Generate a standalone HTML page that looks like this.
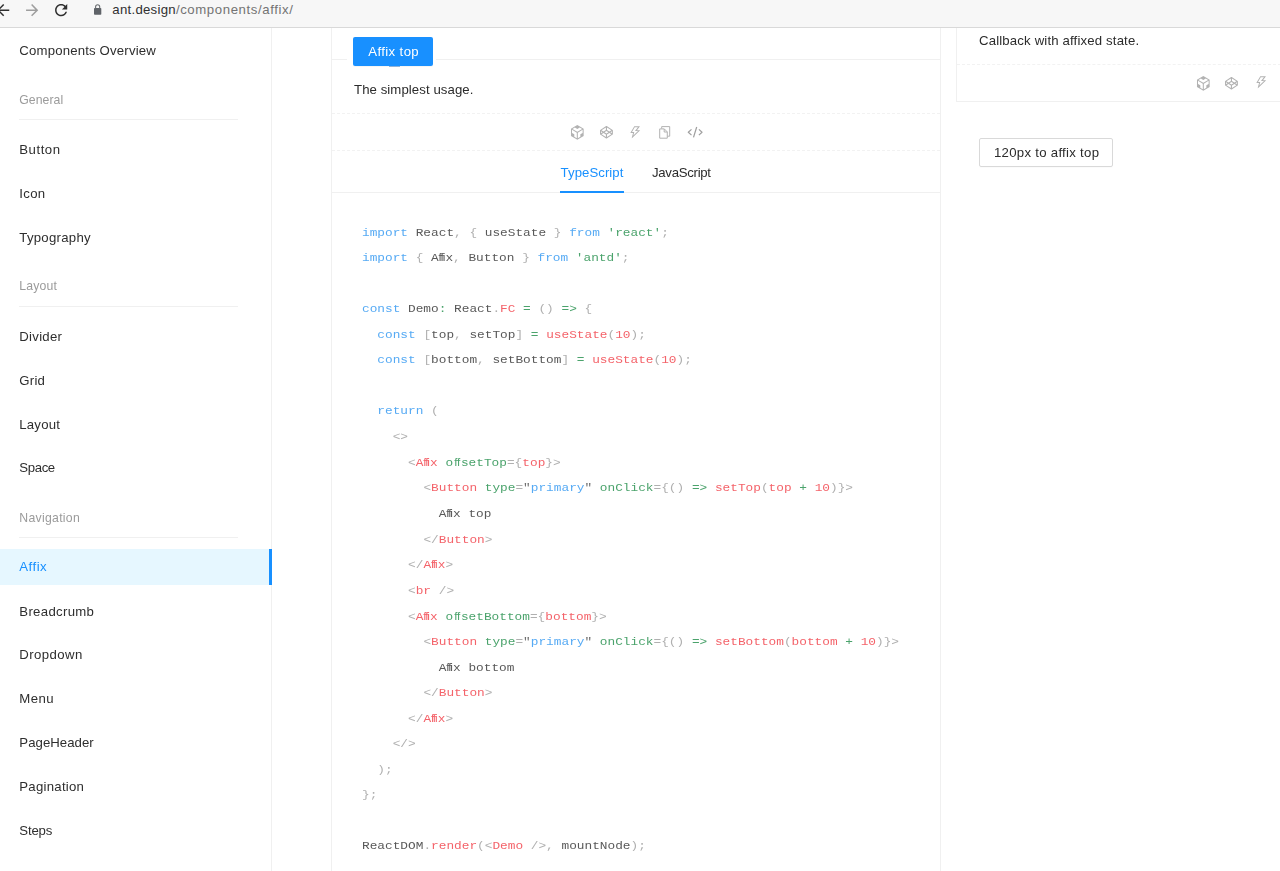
<!DOCTYPE html>
<html lang="en">
<head>
<meta charset="utf-8">
<title>Affix - Ant Design</title>
<style>
*{box-sizing:border-box}
html,body{margin:0;padding:0}
body{filter:blur(.45px);width:1280px;height:871px;overflow:hidden;background:#fff;position:relative;
  font-family:"Liberation Sans",sans-serif;font-size:13.2px;color:#2b2b2b}
/* ---------- browser chrome ---------- */
.chrome{position:absolute;left:0;top:0;width:1280px;height:28px;background:#f7f7f7;border-bottom:1px solid #d9d9d9}
.chrome svg{position:absolute;width:18.3px;height:18.3px;top:0.8px}
.url{position:absolute;left:112.3px;top:0;height:20px;line-height:20px;color:#737373;white-space:nowrap;letter-spacing:.6px}
.url b{font-weight:400;color:#303030;letter-spacing:.273px}
/* ---------- sidebar ---------- */
.side{position:absolute;left:0;top:28px;width:272px;height:843px;border-right:1px solid #f0f0f0}
.side ul{list-style:none;margin:0;padding:0}
.side li{position:absolute;left:0;width:271px;height:36px;line-height:36px;padding-left:19.3px;white-space:nowrap;color:#2e2e2e}
.side li.grp{color:#9b9b9b;font-size:12.26px}
.side li.grp:after{content:"";position:absolute;left:19px;width:219px;top:37.6px;height:1px;background:#f0f0f0}
.side li.sel{background:#e6f7ff;color:#1890ff}
.side li.sel:after{content:"";position:absolute;right:-1px;top:0;width:3px;height:100%;background:#1890ff}
/* ---------- main card ---------- */
.card{position:absolute;left:331px;top:28px;width:610px;height:843px;border-left:1px solid #f0f0f0;border-right:1px solid #f0f0f0}
.hline{position:absolute;left:0;right:0;height:0;border-top:1px solid #f0f0f0}
.dline{position:absolute;left:0;right:0;height:0;border-top:1px dashed #f2f2f2}
.t{position:absolute;white-space:nowrap;height:20px;line-height:20px}
.btn-primary{position:absolute;left:353px;top:37px;width:80px;height:29px;background:#1890ff;border-radius:2px;box-shadow:0 1px 0 rgba(0,0,0,.04)}
.btn-primary .t{color:#fff}
.btn-primary:after{content:"";position:absolute;left:36px;top:29px;width:11px;height:1px;background:#8fb2d8}
.act{color:#1890ff}
.ink{position:absolute;left:560px;top:191px;width:64px;height:2px;background:#1890ff}
.ic{position:absolute;overflow:visible;width:14.63px;height:14.63px;fill:#b2b2b2}
.ic.st{fill:none;stroke:#b2b2b2;stroke-width:1;stroke-linejoin:round}
.ic.code{stroke:#a0a0a0;stroke-width:1.25}
/* ---------- code ---------- */
pre{position:absolute;left:362px;top:219.9px;margin:0;font-family:"Liberation Mono",monospace;font-size:12.79px;line-height:29.051px;color:#595959;white-space:pre;transform:scaleY(0.88);transform-origin:0 0}
pre code{font:inherit;display:block}
pre .k{color:#56aaf4}   /* keyword / attr value */
pre .p{color:#b0b0b0}   /* punctuation */
pre .q{color:#6e6e6e}   /* attribute quotes */
pre .f{color:#f4636a}   /* function / tag / number */
pre .s{color:#4ba36c}   /* string / attr name / operator */
pre .l3,pre .l2{display:inline-block;font-family:"Liberation Sans",sans-serif;font-size:11.8px;text-align:center;vertical-align:baseline;line-height:1}
pre .l3{width:6.7px;letter-spacing:-1.15px;text-indent:-1.4px}
pre .l2{width:7.85px;letter-spacing:-.4px;text-indent:0}
/* ---------- right column ---------- */
.card2{position:absolute;left:956px;top:28px;width:330px;height:74px;border-left:1px solid #f0f0f0;border-bottom:1px solid #f0f0f0}
.btn-default{position:absolute;left:979px;top:138px;width:134px;height:29px;border:1px solid #d9d9d9;border-radius:2px;background:#fff;box-shadow:0 1px 0 rgba(0,0,0,.015)}
</style>
</head>
<body>
<header class="chrome">
  <svg style="left:-6.3px" viewBox="0 0 24 24"><path fill="#2f2f2f" d="M20 11H7.83l5.59-5.59L12 4l-8 8 8 8 1.41-1.41L7.83 13H20v-2z"/></svg>
  <svg style="left:22.5px" viewBox="0 0 24 24"><path fill="#9e9e9e" d="M12 4l-1.41 1.41L16.17 11H4v2h12.17l-5.58 5.59L12 20l8-8z"/></svg>
  <svg style="left:51.8px" viewBox="0 0 24 24"><path fill="#2f2f2f" d="M17.65 6.35C16.2 4.9 14.21 4 12 4c-4.42 0-7.99 3.58-7.99 8s3.57 8 7.99 8c3.73 0 6.84-2.55 7.73-6h-2.08c-.82 2.33-3.04 4-5.65 4-3.31 0-6-2.69-6-6s2.69-6 6-6c1.66 0 3.14.69 4.22 1.78L13 11h7V4l-2.35 2.35z"/></svg>
  <svg style="left:92px;top:3px;width:12px;height:13px" viewBox="0 0 12 13"><rect x="2" y="5" width="7.3" height="6.7" rx=".8" fill="#5f6368"/><path d="M3.600 5.500V3.800a2.050 2.050 0 0 1 4.100 0V5.500" fill="none" stroke="#6b6f73" stroke-width="1.100"/></svg>
  <div class="url"><b>ant.design</b>/components/affix/</div>
</header>

<nav class="side">
  <ul>
    <li style="top:5.3px;letter-spacing:0.172px">Components Overview</li>
    <li class="grp" style="top:53.7px;letter-spacing:0.042px">General</li>
    <li style="top:103.7px;letter-spacing:0.513px">Button</li>
    <li style="top:147.6px;letter-spacing:0.316px">Icon</li>
    <li style="top:191.5px;letter-spacing:0.264px">Typography</li>
    <li class="grp" style="top:240.3px;letter-spacing:0.180px">Layout</li>
    <li style="top:290.7px;letter-spacing:0.270px">Divider</li>
    <li style="top:334.6px;letter-spacing:0.230px">Grid</li>
    <li style="top:378.5px;letter-spacing:0.195px">Layout</li>
    <li style="top:422.3px;letter-spacing:-0.375px">Space</li>
    <li class="grp" style="top:471.7px;letter-spacing:0.289px">Navigation</li>
    <li class="sel" style="top:521.4px;letter-spacing:0.500px">Affix</li>
    <li style="top:565.5px;letter-spacing:0.312px">Breadcrumb</li>
    <li style="top:609.3px;letter-spacing:0.418px">Dropdown</li>
    <li style="top:653.2px;letter-spacing:0.434px">Menu</li>
    <li style="top:697.0px;letter-spacing:0.039px">PageHeader</li>
    <li style="top:740.8px;letter-spacing:0.259px">Pagination</li>
    <li style="top:784.6px;letter-spacing:-0.156px">Steps</li>
  </ul>
</nav>

<section class="card">
  <div class="hline" style="top:31px;right:auto;width:15px"></div>
  <div class="hline" style="top:31px;left:104px"></div>
  <div class="dline" style="top:85px"></div>
  <div class="dline" style="top:122px"></div>
  <div class="hline" style="top:164px"></div>
</section>
<div class="btn-primary"><span class="t" style="left:15.3px;top:4.6px;letter-spacing:.372px">Affix top</span></div>
<span class="t" style="left:354px;top:80px;letter-spacing:.076px">The simplest usage.</span>

<div class="icons">
  <svg class="ic" style="left:570.4px;top:125.0px" viewBox="0 0 1024 1024"><path d="M755 140.3l0.5-0.3h0.3L512 0 268.3 140h-0.3l0.8 0.4L68.6 256v512L512 1024l443.400-256V256L755 140.3z m-30 506.400v171.200L548 920.100V534.700L883.400 341v215.700l-158.500 90z m-584.400-90.600V340.800L476 534.400v385.700L300 818.500V646.700l-159.400-90.600zM511.700 280l171.100-98.300 166.300 96-336.900 194.500-337-194.600 165.700-95.700L511.700 280z"/></svg>
  <svg class="ic" style="left:599.8px;top:126.0px;width:12.9px;height:12.5px" viewBox="0 0 1024 1024" preserveAspectRatio="none"><path d="M123.429 668L468 897.714V692.571L277.143 565.143zM88 585.714L198.286 512 88 438.286v147.428z m468 312L900.571 668 746.857 565.143 556 692.571v205.143zM512 616l155.429-104L512 408 356.571 512zM277.143 458.857L468 331.429V126.286L123.429 356zM825.714 512L936 585.714V438.286z m-78.857-53.143L900.571 356 556 126.286v205.143zM1024 356v312q0 23.429-19.429 36.571l-468 312Q524.571 1024 512 1024t-24.571-7.429l-468-312Q0 691.429 0 668V356q0-23.429 19.429-36.571l468-312Q499.429 0 512 0t24.571 7.429l468 312Q1024 332.571 1024 356z"/></svg>
  <svg class="ic" style="left:628.2px;top:124.7px" viewBox="0 0 1024 1024"><path d="M848 359.3H627.700L825.800 109c4.100-5.300.4-13-6.300-13H436c-2.800 0-5.500 1.500-6.900 4L170 547.500c-3.100 5.300.7 12 6.900 12h174.400l-89.400 357.600c-1.900 7.800 7.500 13.300 13.300 7.700L853.500 373c5.200-4.900 1.700-13.700-5.500-13.700zM378.200 732.500l60.300-241H281.100l189.600-327.400h224.600L487 427.400h211L378.200 732.500z"/></svg>
  <svg class="ic st" style="left:657.4px;top:125px" viewBox="0 0 14.63 14.63"><path d="M4.700 3.600V1.600h8v9.600h-2.300"/><path d="M2.700 3.900h4.600l3 3v6.300H2.700z"/><path d="M7.200 4v3h3"/></svg>
  <svg class="ic st code" style="left:686.7px;top:125px" viewBox="0 0 14.630 14.630"><path d="M4.500 4.400L1.300 7.250l3.200 2.850M11.900 4.400l3.100 2.850-3.100 2.850M9.700 2L6.500 12.400"/></svg>
</div>

<div class="tabs">
  <span class="t act" style="left:560.6px;top:163px;letter-spacing:.056px">TypeScript</span>
  <span class="t" style="left:652px;top:163px;letter-spacing:-.283px">JavaScript</span>
</div>
<div class="ink"></div>

<pre><code><span class="k">import</span> React<span class="p">,</span> <span class="p">{</span> useState <span class="p">}</span> <span class="k">from</span> <span class="s">'react'</span><span class="p">;</span>
<span class="k">import</span> <span class="p">{</span> A<span class="l3">ffi</span>x<span class="p">,</span> Button <span class="p">}</span> <span class="k">from</span> <span class="s">'antd'</span><span class="p">;</span>

<span class="k">const</span> Demo<span class="s">:</span> React<span class="p">.</span><span class="f">FC</span> <span class="s">=</span> <span class="p">()</span> <span class="s">=&gt;</span> <span class="p">{</span>
  <span class="k">const</span> <span class="p">[</span>top<span class="p">,</span> setTop<span class="p">]</span> <span class="s">=</span> <span class="f">useState</span><span class="p">(</span><span class="f">10</span><span class="p">);</span>
  <span class="k">const</span> <span class="p">[</span>bottom<span class="p">,</span> setBottom<span class="p">]</span> <span class="s">=</span> <span class="f">useState</span><span class="p">(</span><span class="f">10</span><span class="p">);</span>

  <span class="k">return</span> <span class="p">(</span>
    <span class="p">&lt;&gt;</span>
      <span class="p">&lt;</span><span class="f">A<span class="l3">ffi</span>x</span> <span class="s">o<span class="l2">ff</span>setTop</span><span class="p">={</span><span class="f">top</span><span class="p">}&gt;</span>
        <span class="p">&lt;</span><span class="f">Button</span> <span class="s">type</span><span class="p">=</span><span class="q">"</span><span class="k">primary</span><span class="q">"</span> <span class="s">onClick</span><span class="p">={()</span> <span class="s">=&gt;</span> <span class="f">setTop</span><span class="p">(</span><span class="f">top</span> <span class="s">+</span> <span class="f">10</span><span class="p">)}&gt;</span>
          A<span class="l3">ffi</span>x top
        <span class="p">&lt;/</span><span class="f">Button</span><span class="p">&gt;</span>
      <span class="p">&lt;/</span><span class="f">A<span class="l3">ffi</span>x</span><span class="p">&gt;</span>
      <span class="p">&lt;</span><span class="f">br</span> <span class="p">/&gt;</span>
      <span class="p">&lt;</span><span class="f">A<span class="l3">ffi</span>x</span> <span class="s">o<span class="l2">ff</span>setBottom</span><span class="p">={</span><span class="f">bottom</span><span class="p">}&gt;</span>
        <span class="p">&lt;</span><span class="f">Button</span> <span class="s">type</span><span class="p">=</span><span class="q">"</span><span class="k">primary</span><span class="q">"</span> <span class="s">onClick</span><span class="p">={()</span> <span class="s">=&gt;</span> <span class="f">setBottom</span><span class="p">(</span><span class="f">bottom</span> <span class="s">+</span> <span class="f">10</span><span class="p">)}&gt;</span>
          A<span class="l3">ffi</span>x bottom
        <span class="p">&lt;/</span><span class="f">Button</span><span class="p">&gt;</span>
      <span class="p">&lt;/</span><span class="f">A<span class="l3">ffi</span>x</span><span class="p">&gt;</span>
    <span class="p">&lt;/&gt;</span>
  <span class="p">);</span>
<span class="p">};</span>

ReactDOM<span class="p">.</span><span class="f">render</span><span class="p">(&lt;</span><span class="f">Demo</span> <span class="p">/&gt;,</span> mountNode<span class="p">);</span></code></pre>

<section class="card2">
  <div class="dline" style="top:36px"></div>
</section>
<span class="t" style="left:979px;top:31px;letter-spacing:.156px">Callback with affixed state.</span>
<div class="icons">
  <svg class="ic" style="left:1196.0px;top:75.5px" viewBox="0 0 1024 1024"><path d="M755 140.3l0.5-0.3h0.3L512 0 268.3 140h-0.3l0.8 0.4L68.6 256v512L512 1024l443.400-256V256L755 140.3z m-30 506.400v171.200L548 920.100V534.700L883.400 341v215.700l-158.500 90z m-584.400-90.600V340.800L476 534.400v385.700L300 818.500V646.700l-159.400-90.600zM511.700 280l171.100-98.300 166.300 96-336.900 194.500-337-194.600 165.700-95.700L511.700 280z"/></svg>
  <svg class="ic" style="left:1225.2px;top:76.5px;width:12.9px;height:12.5px" viewBox="0 0 1024 1024" preserveAspectRatio="none"><path d="M123.429 668L468 897.714V692.571L277.143 565.143zM88 585.714L198.286 512 88 438.286v147.428z m468 312L900.571 668 746.857 565.143 556 692.571v205.143zM512 616l155.429-104L512 408 356.571 512zM277.143 458.857L468 331.429V126.286L123.429 356zM825.714 512L936 585.714V438.286z m-78.857-53.143L900.571 356 556 126.286v205.143zM1024 356v312q0 23.429-19.429 36.571l-468 312Q524.571 1024 512 1024t-24.571-7.429l-468-312Q0 691.429 0 668V356q0-23.429 19.429-36.571l468-312Q499.429 0 512 0t24.571 7.429l468 312Q1024 332.571 1024 356z"/></svg>
  <svg class="ic" style="left:1253.5px;top:75.2px" viewBox="0 0 1024 1024"><path d="M848 359.3H627.700L825.800 109c4.100-5.300.4-13-6.300-13H436c-2.800 0-5.500 1.500-6.900 4L170 547.500c-3.100 5.300.7 12 6.900 12h174.400l-89.400 357.600c-1.900 7.800 7.500 13.300 13.300 7.700L853.500 373c5.200-4.900 1.700-13.700-5.500-13.700zM378.200 732.500l60.300-241H281.100l189.600-327.400h224.600L487 427.400h211L378.200 732.500z"/></svg>
</div>
<div class="btn-default"><span class="t" style="left:14px;top:3.500px;letter-spacing:.28px">120px to affix top</span></div>
</body>
</html>
